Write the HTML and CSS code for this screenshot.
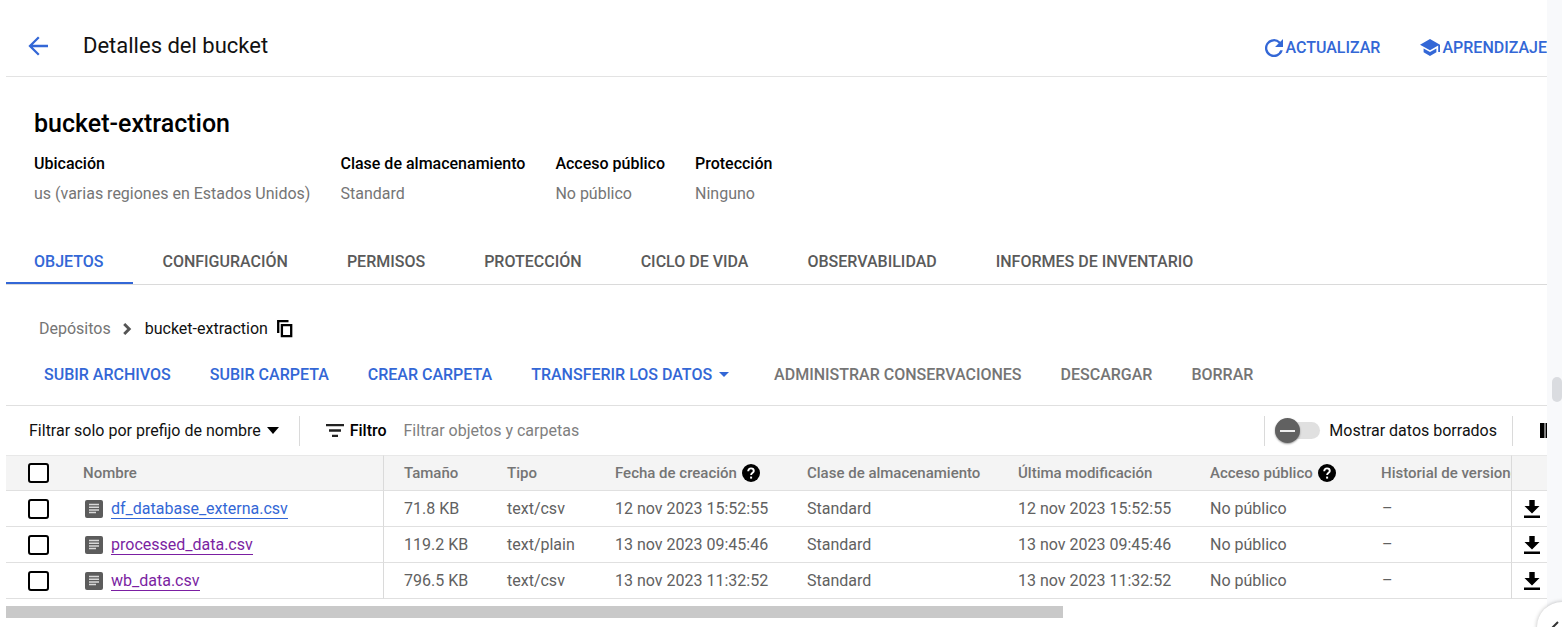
FILE: index.html
```html
<!DOCTYPE html>
<html lang="es">
<head>
<meta charset="utf-8">
<title>Detalles del bucket</title>
<meta name="viewport" content="width=device-width, initial-scale=1">
<link rel="stylesheet" href="styles.css">
</head>
<body>
<svg class="sprite" aria-hidden="true">
  <symbol id="i-doc" viewBox="0 0 18 18"><rect width="18" height="18" rx="2" fill="#5c5c5c"/><path d="M4 4.500h10M4 7.200h10M4 9.900h10M4 12.600h7" stroke="#d8d8d8" stroke-width="1.500"/></symbol>
  <symbol id="i-help" viewBox="0 0 18 18"><circle cx="9" cy="9" r="9" fill="#000"/><path d="M6.200 7.200C6.200 5.400 7.400 4.400 9 4.400s2.800 1 2.800 2.500C11.800 8.700 9.100 8.800 9.100 11" fill="none" stroke="#fff" stroke-width="1.900"/><path d="M8.100 12.600h2v2h-2z" fill="#fff"/></symbol>
  <symbol id="i-down" viewBox="0 0 16 18"><path d="M5.300 0h5.400v6H15.500L8 13.500.5 6h4.800zM0 15.500h16V18H0z"/></symbol>
</svg>
<div class="page">
  <main class="content">
    <header class="topbar">
      <button class="back" aria-label="Atrás"><svg width="20" height="20" viewBox="0 0 20 20"><path d="M20 8.800H4.800L11.600 2 10 .4.4 10l9.600 9.600 1.600-1.600-6.800-6.800H20z" fill="currentColor"/></svg></button>
      <h1>Detalles del bucket</h1>
      <div class="top-actions">
        <button class="action"><svg width="18" height="18" viewBox="0 0 18 18"><path d="M15.300 2.700A9 9 0 1 0 17.700 11.300h-2.400A6.700 6.700 0 1 1 13.700 4.300L10.100 7.900H18V0z" fill="currentColor"/></svg>ACTUALIZAR</button>
        <button class="action"><svg width="20" height="18" viewBox="0 0 20 18"><path d="M10 0 0 5.700l10 5.600 8.200-4.700V13H20V5.700zM3.600 9.500v3.700L10 16.900l6.400-3.700V9.500L10 13z" fill="currentColor"/></svg>APRENDIZAJE</button>
      </div>
    </header>

    <section class="summary">
      <h2>bucket-extraction</h2>
      <dl>
        <div><dt>Ubicación</dt><dd>us (varias regiones en Estados Unidos)</dd></div>
        <div><dt>Clase de almacenamiento</dt><dd>Standard</dd></div>
        <div><dt>Acceso público</dt><dd>No público</dd></div>
        <div><dt>Protección</dt><dd>Ninguno</dd></div>
      </dl>
    </section>

    <nav class="tabs">
      <a class="active" href="#objetos">OBJETOS</a>
      <a href="#configuracion">CONFIGURACIÓN</a>
      <a href="#permisos">PERMISOS</a>
      <a href="#proteccion">PROTECCIÓN</a>
      <a href="#ciclo">CICLO DE VIDA</a>
      <a href="#observabilidad">OBSERVABILIDAD</a>
      <a href="#informes">INFORMES DE INVENTARIO</a>
    </nav>

    <div class="crumbs">
      <a href="#depositos">Depósitos</a>
      <svg width="9" height="12" viewBox="0 0 9 12"><path d="M1.200 1l5 5-5 5" fill="none" stroke="#555" stroke-width="2.900"/></svg>
      <span>bucket-extraction</span>
      <button class="copy" aria-label="Copiar"><svg width="16" height="18" viewBox="0 0 16 18"><path d="M1.200 13V1.200h10.300M4.900 5.200h9.300v11H4.900z" fill="none" stroke="#000" stroke-width="2.300"/></svg></button>
    </div>

    <div class="commands">
      <button>SUBIR ARCHIVOS</button>
      <button>SUBIR CARPETA</button>
      <button>CREAR CARPETA</button>
      <button class="menu">TRANSFERIR LOS DATOS<svg width="10" height="5" viewBox="0 0 10 5"><path d="M0 0h10L5 5z" fill="currentColor"/></svg></button>
      <button disabled>ADMINISTRAR CONSERVACIONES</button>
      <button disabled>DESCARGAR</button>
      <button disabled>BORRAR</button>
    </div>

    <div class="filters">
      <button class="prefix">Filtrar solo por prefijo de nombre<svg width="12" height="7" viewBox="0 0 12 7"><path d="M0 0h12L6 7z"/></svg></button>
      <label class="filter-label" for="filter"><svg width="18" height="13" viewBox="0 0 18 13"><path d="M0 1.200h18M3 6.500h12M6 11.800h6" stroke="#222" stroke-width="2.300"/></svg>Filtro</label>
      <input id="filter" type="text" placeholder="Filtrar objetos y carpetas">
      <label class="toggle"><input type="checkbox" role="switch"><span>Mostrar datos borrados</span></label>
      <button class="columns" aria-label="Columnas"><svg width="21" height="15" viewBox="0 0 21 15"><path d="M0 0h4.500v15H0zM5.500 0H10v15H5.500zM11 0h4.500v15H11z"/></svg></button>
    </div>

    <table>
      <colgroup><col class="c-check"><col class="c-name"><col class="c-size"><col class="c-type"><col class="c-date"><col class="c-class"><col class="c-date"><col class="c-access"><col><col class="c-get"></colgroup>
      <thead>
        <tr><th><input type="checkbox" aria-label="Seleccionar todo"></th><th>Nombre</th><th>Tamaño</th><th>Tipo</th><th>Fecha de creación<svg class="help"><use href="#i-help"/></svg></th><th>Clase de almacenamiento</th><th>Última modificación</th><th>Acceso público<svg class="help"><use href="#i-help"/></svg></th><th>Historial de versiones</th><th></th></tr>
      </thead>
      <tbody>
        <tr><td><input type="checkbox" aria-label="df_database_externa.csv"></td><td><svg class="doc"><use href="#i-doc"/></svg><a href="#df">df_database_externa.csv</a></td><td>71.8 KB</td><td>text/csv</td><td>12 nov 2023 15:52:55</td><td>Standard</td><td>12 nov 2023 15:52:55</td><td>No público</td><td><span class="none">–</span></td><td><button aria-label="Descargar"><svg class="down"><use href="#i-down"/></svg></button></td></tr>
        <tr><td><input type="checkbox" aria-label="processed_data.csv"></td><td><svg class="doc"><use href="#i-doc"/></svg><a class="visited" href="#processed">processed_data.csv</a></td><td>119.2 KB</td><td>text/plain</td><td>13 nov 2023 09:45:46</td><td>Standard</td><td>13 nov 2023 09:45:46</td><td>No público</td><td><span class="none">–</span></td><td><button aria-label="Descargar"><svg class="down"><use href="#i-down"/></svg></button></td></tr>
        <tr><td><input type="checkbox" aria-label="wb_data.csv"></td><td><svg class="doc"><use href="#i-doc"/></svg><a class="visited" href="#wb">wb_data.csv</a></td><td>796.5 KB</td><td>text/csv</td><td>13 nov 2023 11:32:52</td><td>Standard</td><td>13 nov 2023 11:32:52</td><td>No público</td><td><span class="none">–</span></td><td><button aria-label="Descargar"><svg class="down"><use href="#i-down"/></svg></button></td></tr>
      </tbody>
    </table>
    <div class="hscroll"></div>
  </main>
  <aside class="gutter"><div class="thumb"></div></aside>
</div>
<button class="expand" aria-label="Mostrar panel"><svg width="10" height="14" viewBox="0 0 10 14"><path d="M8 1L2 7l6 6" fill="none" stroke="#333" stroke-width="2"/></svg></button>
</body>
</html>
```
FILE: styles.css
```css
* { box-sizing: border-box; }
body { margin: 0; background: #fff; color: #111; font: 16px/20px Roboto, "Liberation Sans", sans-serif; overflow: hidden; }
h1, h2, dl, dd { margin: 0; font-weight: 400; }
button { border: 0; padding: 0; background: none; font: inherit; color: inherit; white-space: nowrap; cursor: pointer; }
svg { flex: none; display: block; }
a { color: inherit; text-decoration: none; }
.sprite { position: absolute; width: 0; height: 0; }

.page { display: flex; min-height: 100vh; padding-left: 6px; }
.content { flex: 1; min-width: 0; overflow: hidden; }
.gutter { flex: none; width: 15px; padding-top: 377px; background: #f8f9fb; }
.thumb { height: 25px; margin-left: 5px; border-radius: 5px; background: #dadce0; }

.topbar { display: flex; align-items: center; height: 77px; padding: 16px 0 0 22px; border-bottom: 1px solid #e3e3e3; }
.back { color: #3367d6; }
h1 { margin-left: 35px; font-size: 22px; line-height: 28px; }
.top-actions { display: flex; gap: 40px; margin-left: auto; padding-top: 3px; }
.action { display: flex; align-items: center; gap: 2px; color: #3367d6; font-weight: 500; }

.summary { padding: 32px 28px 0; }
h2 { font-size: 25px; line-height: 30px; font-weight: 500; color: #000; }
dl { display: flex; gap: 30px; margin-top: 15px; }
dt { font-weight: 500; color: #000; }
dd { margin-top: 10px; color: #757575; }

.tabs { display: flex; height: 81px; border-bottom: 1px solid #dadada; }
.tabs a { display: flex; align-items: flex-end; padding: 0 30px 10px 29px; border-bottom: 2px solid transparent; color: #5a5a5a; font-weight: 500; white-space: nowrap; }
.tabs a:first-child { padding-left: 28px; }
.tabs .active { color: #3367d6; border-color: #3367d6; }

.crumbs { display: flex; align-items: center; padding: 34px 0 0 33px; }
.crumbs a { color: #757575; }
.crumbs > svg { margin: 0 13px 0 12px; }
.copy { margin-left: 9px; }

.commands { display: flex; align-items: center; gap: 39px; height: 67px; padding: 5px 0 0 38px; border-bottom: 1px solid #e0e0e0; }
.commands button { display: flex; align-items: center; gap: 7px; color: #3367d6; font-weight: 500; }
.commands .menu { padding-right: 6px; }
.commands button:disabled { color: #757575; }

.filters { display: flex; align-items: center; height: 49px; padding-left: 23px; }
.prefix { display: flex; align-items: center; gap: 6px; height: 30px; padding-right: 20px; border-right: 1px solid #dadada; }
.filter-label { display: flex; align-items: center; gap: 6px; margin-left: 26px; font-weight: 500; color: #000; }
.filters input[type="text"] { flex: 1; min-width: 0; margin-left: 17px; padding: 0; border: 0; outline: 0; font: inherit; }
.filters input::placeholder { color: #808080; opacity: 1; }
.toggle { display: flex; align-items: center; gap: 9px; height: 30px; padding: 0 15px 0 10px; border: solid #dadada; border-width: 0 1px; white-space: nowrap; }
.toggle input { appearance: none; display: flex; align-items: center; width: 45px; height: 17px; margin: 0; border-radius: 9px; background: #e0e0e0; }
.toggle input::before { content: ""; width: 25px; height: 25px; border-radius: 50%; background: linear-gradient(#eee, #eee) center / 15px 2px no-repeat #616161; box-shadow: 0 1px 2px #0006; }
.columns { width: 34px; padding-left: 27px; overflow: hidden; }

table { width: 100%; table-layout: fixed; border-spacing: 0; color: #616161; }
.c-check { width: 77px; }
.c-name { width: 300px; }
.c-size { width: 104px; }
.c-type { width: 108px; }
.c-date { width: 192px; }
.c-class { width: 211px; }
.c-access { width: 171px; }
.c-get { width: 36px; }
th, td { height: 36px; padding: 0 0 0 20px; border-bottom: 1px solid #e0e0e0; text-align: left; white-space: nowrap; overflow: hidden; }
th { border-top: 1px solid #e8e8e8; background: #f4f4f4; color: #757575; font-size: 15px; font-weight: 500; }
th:first-child, td:first-child { padding-left: 22px; }
th:nth-child(2), td:nth-child(2) { padding-left: 0; }
th:nth-child(3), td:nth-child(3), th:last-child, td:last-child { border-left: 1px solid #dadada; }
td:last-child { padding-left: 12px; }
table input { appearance: none; display: block; width: 21px; height: 20px; margin: 0; border: 2px solid #000; border-radius: 3px; background: #fff; }
td a { display: inline-block; line-height: 19px; vertical-align: middle; border-bottom: 1px solid currentColor; color: #3367d6; }
td a.visited { color: #7b1fa2; }
.doc, .help { display: inline-block; width: 18px; height: 18px; vertical-align: middle; }
.doc { margin: 0 8px 0 2px; }
.help { margin-left: 5px; vertical-align: -4px; }
.none { padding-left: 1px; }
.down { width: 16px; height: 18px; }
td button { display: block; }
.hscroll { width: 68.600%; height: 12px; margin-top: 7px; background: #c9c9c9; }

.expand { display: flex; align-items: flex-start; position: fixed; right: -25px; bottom: -25px; width: 50px; height: 50px; padding: 19px 0 0 13px; border-radius: 50%; background: #fff; box-shadow: 0 0 4px #0004; }
```
